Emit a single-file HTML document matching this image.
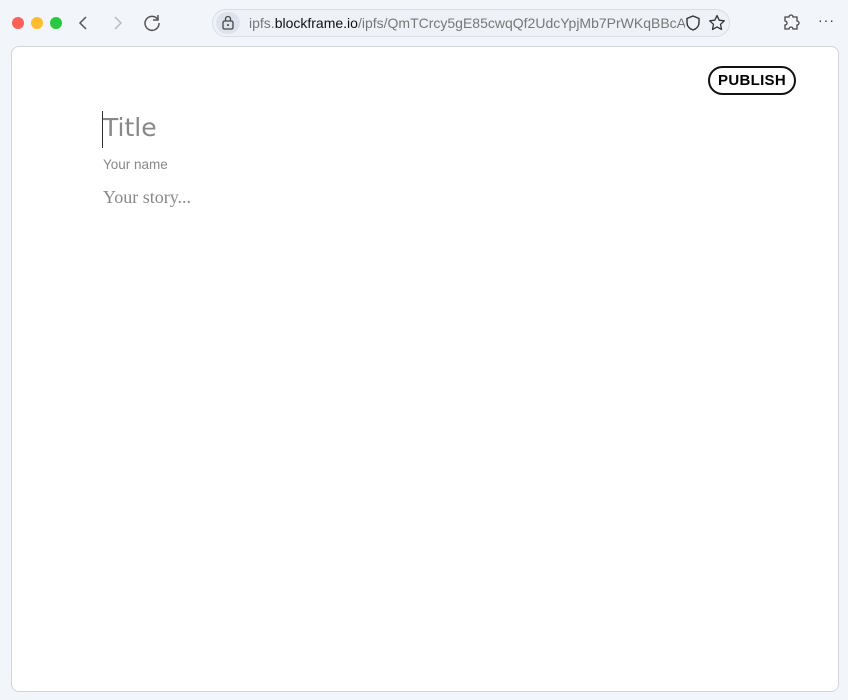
<!DOCTYPE html>
<html><head><meta charset="utf-8"><style>
body{margin:0;width:848px;height:700px;background:#f2f5fa;position:relative;overflow:hidden;font-family:"Liberation Sans",sans-serif}
.dot{position:absolute;top:17px;width:12px;height:12px;border-radius:50%}
.url{position:absolute;left:212px;top:9px;width:518px;height:28px;border:1px solid #d8dde6;border-radius:15px;background:#eef2f8;box-sizing:border-box}
.page{position:absolute;left:11px;top:46px;width:828px;height:646px;background:#fff;border:1px solid #d2d6dc;border-radius:8px;box-sizing:border-box}
.pub{position:absolute;left:696px;top:19px;width:88px;height:29px;border:2px solid #111;border-radius:16px;box-sizing:border-box;font-weight:bold;font-size:15px;text-align:center;line-height:25px;letter-spacing:.3px}
</style></head><body>
<div class="dot" style="left:12px;background:#fe5f57"></div>
<div class="dot" style="left:31px;background:#febc2e"></div>
<div class="dot" style="left:50px;background:#28c840"></div>
<svg style="position:absolute;left:76px;top:14px" width="16" height="18"><path d="M10 3L4 9l6 6" fill="none" stroke="#555" stroke-width="1.5"/></svg>
<svg style="position:absolute;left:110px;top:14px" width="16" height="18"><path d="M5 3l6 6-6 6" fill="none" stroke="#bbb" stroke-width="1.5"/></svg>
<svg style="position:absolute;left:142px;top:13px" width="20" height="20"><path d="M15.5 6A7 7 0 1 0 17 10" fill="none" stroke="#555" stroke-width="1.5"/><path d="M16 2v5h-5" fill="none" stroke="#555" stroke-width="1.5"/></svg>
<div class="url">
<div style="position:absolute;left:3px;top:2px;width:24px;height:22px;border-radius:11px;background:#dde3ee"></div>
<svg style="position:absolute;left:8px;top:5px" width="14" height="16"><rect x="2" y="6" width="10" height="8" rx="1.5" fill="none" stroke="#444" stroke-width="1.3"/><path d="M4.5 6V4a2.5 2.5 0 0 1 5 0v2" fill="none" stroke="#444" stroke-width="1.3"/><circle cx="7" cy="10" r="1" fill="#444"/></svg>
<div style="position:absolute;left:36px;top:5px;font-size:14px;color:#777;white-space:nowrap;width:436px;overflow:hidden">ipfs.<span style="color:#111">blockframe.io</span>/ipfs/QmTCrcy5gE85cwqQf2UdcYpjMb7PrWKqBBcAuH</div>
<svg style="position:absolute;left:471px;top:4px" width="18" height="18"><path d="M9 2l6 2.5v4c0 4-3 6.5-6 7.5-3-1-6-3.5-6-7.5v-4z" fill="none" stroke="#333" stroke-width="1.4"/></svg>
<svg style="position:absolute;left:494px;top:3px" width="20" height="20"><path d="M10 2.5l2.2 4.7 5.1.6-3.8 3.5 1 5.1L10 13.9l-4.5 2.5 1-5.1-3.8-3.5 5.1-.6z" fill="none" stroke="#333" stroke-width="1.3" stroke-linejoin="round"/></svg>
</div>
<svg style="position:absolute;left:782px;top:13px" width="20" height="20"><path d="M7 4a2 2 0 0 1 4 0h4v4a2 2 0 0 1 0 4v4h-4a2 2 0 0 0-4 0H3v-4a2 2 0 0 0 0-4V4z" fill="none" stroke="#444" stroke-width="1.3"/></svg>
<div style="position:absolute;left:818px;top:12px;font-size:14px;color:#333;letter-spacing:1px">···</div>
<div class="page">
<div class="pub">PUBLISH</div>
<div style="position:absolute;left:90px;top:64px;width:1px;height:37px;background:#333"></div>
<div style="position:absolute;left:91px;top:66px;font-family:'DejaVu Sans',sans-serif;font-size:25px;color:#888">Title</div>
<div style="position:absolute;left:91px;top:110px;font-family:'Liberation Sans',sans-serif;font-size:13.5px;color:#888">Your name</div>
<div style="position:absolute;left:91px;top:140px;font-family:'Liberation Serif',serif;font-size:18px;color:#888">Your story...</div>
</div>
</body></html>
